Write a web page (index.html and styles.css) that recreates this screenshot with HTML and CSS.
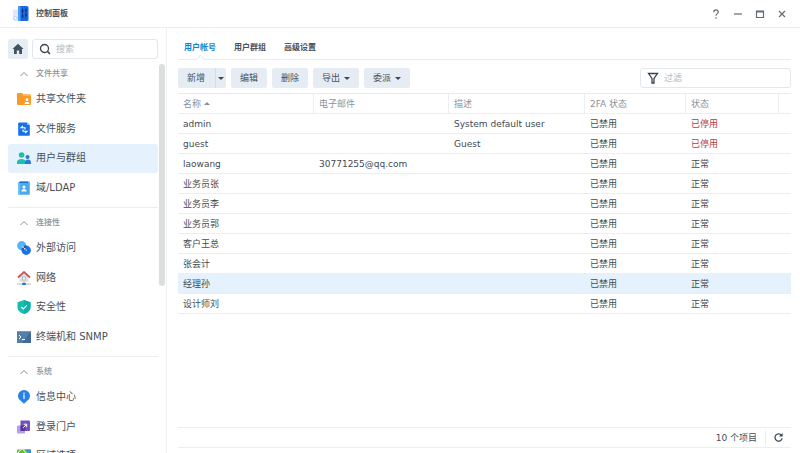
FILE: index.html
```html
<!DOCTYPE html>
<html lang="zh-CN">
<head>
<meta charset="utf-8">
<title>控制面板</title>
<link rel="stylesheet" href="styles.css">
</head>
<body>
<header class="titlebar">
  <svg class="app-icon" viewBox="0 0 16 16"><path d="M1 3.500h5V15H1a1 1 0 0 1-1-1V4.500a1 1 0 0 1 1-1z" fill="#dde9f8"/><circle cx="2.500" cy="12" r="1.500" fill="#fff" stroke="#8fb0dd" stroke-width=".5"/><path d="M5 0h9a1.500 1.500 0 0 1 1.500 1.500v12A1.500 1.500 0 0 1 14 15H5z" fill="#1b6be0"/><path d="M5 0h2.500v15H5z" fill="#4a9cf5"/><path d="M9.500 2.500v10M13 2.500v10" stroke="#0b3fa0"/><path d="M8.500 5h2M12 9h2M8.500 10h2M12 4h2" stroke="#0a2f80" stroke-width="1.500"/></svg>
  <h1 class="title">控制面板</h1>
  <div class="window-controls">
    <button type="button" aria-label="帮助"><svg viewBox="0 0 10 10"><path d="M2.800 3.200C2.800 .2 7.400 .3 7.300 3 7.200 4.700 5 4.700 5 6.800M5 8.300v1.400"/></svg></button>
    <button type="button" aria-label="最小化"><svg viewBox="0 0 10 10"><path d="M1 5h8"/></svg></button>
    <button type="button" aria-label="最大化"><svg viewBox="0 0 10 10"><path d="M1.500 2h7v6.500h-7zM1.500 3h7"/></svg></button>
    <button type="button" aria-label="关闭"><svg viewBox="0 0 10 10"><path d="M2 2l6 6M8 2L2 8"/></svg></button>
  </div>
</header>
<div class="body">
  <aside class="sidebar">
    <div class="side-tools">
      <button class="home" type="button" aria-label="主页"><svg viewBox="0 0 12 12"><path d="M6 .8L11.600 6H10v5H7.200V7.500H4.800V11H2V6H.4z" fill="#44525f"/></svg></button>
      <label class="field">
        <svg viewBox="0 0 12 12"><circle cx="5.500" cy="5.500" r="4" fill="none" stroke="#36434f" stroke-width="1.300"/><path d="M8.400 8.400L11 11" stroke="#36434f" stroke-width="1.500"/></svg>
        <input type="text" placeholder="搜索" aria-label="搜索">
      </label>
    </div>
    <div class="side-scroll">
      <nav class="nav">
        <section class="group">
          <h2><svg viewBox="0 0 8 6"><path d="M.5 5L4 1.500 7.500 5"/></svg>文件共享</h2>
          <div class="items">
            <a href="#"><svg viewBox="0 0 14 14"><path d="M0 2a1 1 0 0 1 1-1h4l1.500 1.500H13a1 1 0 0 1 1 1V12a1 1 0 0 1-1 1H1a1 1 0 0 1-1-1z" fill="#f79a2b"/><path d="M0 4h14V3.500a1 1 0 0 0-1-1H7L5.500 4z" fill="#ffb54d"/><circle cx="10" cy="7.700" r="1.400" fill="#fff"/><path d="M7.500 12c0-3 5-3 5 0z" fill="#fff"/></svg>共享文件夹</a>
            <a href="#"><svg viewBox="0 0 14 14"><path d="M2 .5h8L12.800 3v10a.8.800 0 0 1-.8.800H2a.8.800 0 0 1-.8-.8V1.300A.8.800 0 0 1 2 .5z" fill="#1670e8"/><path d="M10 .5V3h2.800z" fill="#8cc4ff"/><path d="M6 4L4 5.700h4v1.800M8 11l2-1.700H6V7.500" fill="none" stroke="#fff" stroke-width="1.100"/></svg>文件服务</a>
            <a class="active" href="#" aria-current="page"><svg viewBox="0 0 14 14"><circle cx="4.600" cy="4" r="2.800" fill="#1fbfae"/><path d="M0 13V11c0-4 9-4 9 0v2z" fill="#1fbfae"/><circle cx="10.500" cy="6" r="2" fill="#2b78dc"/><path d="M8 13v-1.500c0-4 6-4 6 0V13z" fill="#2b78dc"/></svg>用户与群组</a>
            <a href="#"><svg viewBox="0 0 14 14"><path d="M3 .5h9a.8.800 0 0 1 .8.800V13a.8.800 0 0 1-.8.800H2a.8.800 0 0 1-.8-.8V2z" fill="#4ba9ee"/><path d="M1.200 2L3 .5h8V2z" fill="#2377cf"/><path d="M1.200 2H3v11.800H2a.8.800 0 0 1-.8-.8z" fill="#6fc1f8"/><circle cx="7" cy="6" r="1.500" fill="#fff"/><path d="M4.500 10.500c0-3.200 5-3.200 5 0z" fill="#fff"/></svg>域/LDAP</a>
          </div>
        </section>
        <section class="group">
          <h2><svg viewBox="0 0 8 6"><path d="M.5 5L4 1.500 7.500 5"/></svg>连接性</h2>
          <div class="items">
            <a href="#"><svg viewBox="0 0 14 14"><circle cx="4.700" cy="4.700" r="4.600" fill="#56b5f7"/><circle cx="9.200" cy="9.200" r="4.700" fill="#1f72e5"/><path d="M4.600 9.300a4.700 4.700 0 0 1 4.600-4.700c.3 2.500-1.500 4.800-4.600 4.700z" fill="#1556c0"/><path d="M5.500 5.500l4 4" stroke="#fff" stroke-width="1.200" stroke-dasharray="1.500 1"/></svg>外部访问</a>
            <a href="#"><svg viewBox="0 0 14 14"><path d="M2.500 6L7 2l4.500 4v5h-9z" fill="#dce2e8"/><path d="M1 6.500L7 1l6 5.500" fill="none" stroke="#cb5250" stroke-width="1.700"/><rect x="5.500" y="6" width="3" height="3" fill="#f9fbfd" stroke="#9dabba" stroke-width=".7"/><path d="M0 13h14" stroke="#aab6c2"/><path d="M7 11v1" stroke="#789"/><rect x="5" y="12" width="4" height="2" rx=".7" fill="#2673d9"/></svg>网络</a>
            <a href="#"><svg viewBox="0 0 14 14"><path d="M7 0l6.500 2.200V7c0 3.500-2.800 5.800-6.500 7C3.300 12.800.5 10.500.5 7V2.200z" fill="#17bdb0"/><path d="M7 0l6.500 2.200V7c0 3.500-2.800 5.800-6.500 7z" fill="#10b0aa"/><path d="M4.300 7l2 2 3.500-3.700" fill="none" stroke="#fff" stroke-width="1.100"/></svg>安全性</a>
            <a href="#"><svg viewBox="0 0 14 14"><path d="M0 1.500h14V13H0z" fill="#416a99"/><path d="M0 1.500h14L5 13H0z" fill="#567eaa"/><path d="M2 5l2 2-2 2M5 9.500h3" fill="none" stroke="#fff" stroke-width="1"/></svg>终端机和 SNMP</a>
          </div>
        </section>
        <section class="group">
          <h2><svg viewBox="0 0 8 6"><path d="M.5 5L4 1.500 7.500 5"/></svg>系统</h2>
          <div class="items">
            <a href="#"><svg viewBox="0 0 14 14"><path d="M7 0a6 6 0 0 1 6 6c0 3.500-4.200 5.500-6 8-1.800-2.500-6-4.500-6-8a6 6 0 0 1 6-6z" fill="#2482e8"/><path d="M6.300 5H7v4M7 2.500v1.400" fill="none" stroke="#fff" stroke-width="1.200"/></svg>信息中心</a>
            <a href="#"><svg viewBox="0 0 14 14"><rect x="0" y="5.500" width="8" height="8" rx=".8" fill="#b2a0ed"/><path d="M3.500.5H12a1 1 0 0 1 1 1V10a1 1 0 0 1-1 1H3.500z" fill="#7650b7"/><path d="M3.500 5.500H8V11H3.500z" fill="#5b36a0"/><path d="M6.200 7.700l3.300-3.300M6.700 4.200h3v3" fill="none" stroke="#fff" stroke-width="1"/></svg>登录门户</a>
            <a href="#"><svg viewBox="0 0 14 14"><rect y=".5" width="14" height="13" rx="1" fill="#69b82f"/><path d="M8 .5h6v5z" fill="#3193e8"/><path d="M0 5L4 .5M6 .5l7 8" stroke="#fff"/></svg>区域选项</a>
            <a href="#">通知设置</a>
          </div>
        </section>
      </nav>
      <div class="scroll-thumb"></div>
    </div>
  </aside>
  <main class="main">
    <nav class="tabs">
      <a class="current" href="#" aria-current="page">用户帐号</a>
      <a href="#">用户群组</a>
      <a href="#">高级设置</a>
    </nav>
    <div class="toolbar">
      <div class="split"><button class="btn" type="button">新增</button><button class="btn drop" type="button" aria-label="更多新增选项"><i class="caret"></i></button></div>
      <button class="btn" type="button">编辑</button>
      <button class="btn" type="button">删除</button>
      <button class="btn" type="button">导出<i class="caret"></i></button>
      <button class="btn" type="button">委派<i class="caret"></i></button>
      <label class="field filter">
        <svg viewBox="0 0 12 12"><path d="M1.500 1.500h9L7 6.500V11H5V6.500z" fill="none" stroke="#36434f" stroke-width="1.300"/></svg>
        <input type="text" placeholder="过滤" aria-label="过滤">
      </label>
    </div>
    <div class="table-area">
      <table>
        <colgroup><col class="c-name"><col class="c-mail"><col class="c-desc"><col class="c-auth"><col><col class="c-end"></colgroup>
        <thead><tr><th>名称<i class="caret up"></i></th><th>电子邮件</th><th>描述</th><th>2FA 状态</th><th>状态</th><th></th></tr></thead>
        <tbody>
          <tr><td>admin</td><td></td><td>System default user</td><td>已禁用</td><td class="off">已停用</td><td></td></tr>
          <tr><td>guest</td><td></td><td>Guest</td><td>已禁用</td><td class="off">已停用</td><td></td></tr>
          <tr><td>laowang</td><td>30771255@qq.com</td><td></td><td>已禁用</td><td>正常</td><td></td></tr>
          <tr><td>业务员张</td><td></td><td></td><td>已禁用</td><td>正常</td><td></td></tr>
          <tr><td>业务员李</td><td></td><td></td><td>已禁用</td><td>正常</td><td></td></tr>
          <tr><td>业务员郭</td><td></td><td></td><td>已禁用</td><td>正常</td><td></td></tr>
          <tr><td>客户王总</td><td></td><td></td><td>已禁用</td><td>正常</td><td></td></tr>
          <tr><td>张会计</td><td></td><td></td><td>已禁用</td><td>正常</td><td></td></tr>
          <tr class="selected"><td>经理孙</td><td></td><td></td><td>已禁用</td><td>正常</td><td></td></tr>
          <tr><td>设计师刘</td><td></td><td></td><td>已禁用</td><td>正常</td><td></td></tr>
        </tbody>
      </table>
    </div>
    <footer class="status">
      <span>10 个项目</span>
      <button type="button" aria-label="刷新"><svg viewBox="0 0 12 12"><path d="M9.300 3.500A4 4 0 1 0 10 7" fill="none" stroke="#3c4955" stroke-width="1.400"/><path d="M10.500 1v4h-4z" fill="#3c4955"/></svg></button>
    </footer>
  </main>
</div>
</body>
</html>
```
FILE: styles.css
```css
* { box-sizing: border-box; }

body {
  margin: 0;
  height: 100vh;
  overflow: hidden;
  display: flex;
  flex-direction: column;
  background: #fff;
  color: #46505a;
  font: 9px/12px "DejaVu Sans", "Noto Sans CJK SC", sans-serif;
}

button, input { font: inherit; color: inherit; }
button { border: 0; padding: 0; background: none; }
a { color: inherit; text-decoration: none; }
h1, h2 { margin: 0; }

.titlebar {
  flex: none;
  height: 28px;
  display: flex;
  align-items: center;
  padding: 0 12px 0 13px;
  border-bottom: 1px solid #e8ecef;
}
.app-icon { width: 16px; height: 16px; }
.title { margin-left: 7px; font-size: 8px; font-weight: 700; }
.window-controls { margin-left: auto; display: flex; gap: 10px; }
.window-controls button { width: 12px; height: 12px; display: grid; place-items: center; }
.window-controls svg { width: 10px; height: 10px; fill: none; stroke: #626c75; stroke-width: 1.2; }

.body { flex: 1; min-height: 0; display: flex; }

.sidebar {
  flex: none;
  width: 167px;
  display: flex;
  flex-direction: column;
  padding-top: 11px;
  border-right: 1px solid #eef0f2;
}
.side-tools { flex: none; display: flex; gap: 4px; padding: 0 8px; }
.home {
  width: 20px;
  height: 20px;
  display: grid;
  place-items: center;
  border-radius: 2px;
  background: #e6edf5;
}
.home svg { width: 12px; height: 12px; }
.field {
  flex: 1;
  height: 20px;
  display: flex;
  align-items: center;
  gap: 5px;
  padding: 0 6px;
  border: 1px solid #e2e7eb;
  border-radius: 3px;
}
.field svg { flex: none; width: 12px; height: 12px; }
.field input { width: 100%; min-width: 0; padding: 0; border: 0; outline: 0; background: none; }
.field input::placeholder { color: #b4babf; opacity: 1; }

.side-scroll { flex: 1; min-height: 0; display: flex; padding: 5px 1px 0 8px; overflow: hidden; }
.nav { flex: 1; }
.scroll-thumb { flex: none; width: 6px; height: 222px; margin-left: 1px; border-radius: 3px; background: #dcdddd; }
.group { padding-bottom: 4px; }
.group + .group { padding-top: 5px; border-top: 1px solid #eceff1; }
.group h2 {
  height: 20px;
  display: flex;
  align-items: center;
  gap: 8px;
  padding-left: 12px;
  color: #8a9299;
  font-size: 8px;
  font-weight: 500;
}
.group h2 svg { width: 8px; height: 6px; fill: none; stroke: #858e96; stroke-width: 1; }
.items { height: 119px; display: grid; grid-template-rows: repeat(4, 1fr); }
.items a {
  display: flex;
  align-items: center;
  gap: 5px;
  padding-left: 9px;
  border-radius: 3px;
  font-size: 10px;
}
.items a.active { background: #e5f1fc; }
.items svg { width: 14px; height: 14px; }

.main { flex: 1; min-width: 0; display: flex; flex-direction: column; padding: 11px 9px 5px 11px; }
.tabs {
  flex: none;
  height: 21px;
  display: flex;
  gap: 18px;
  padding: 3px 6px 0;
  border-bottom: 1px solid #e8ecef;
  font-size: 8px;
  font-weight: 700;
}
.tabs a { position: relative; }
.tabs .current { color: #0d83cf; }
.tabs .current::after {
  content: "";
  position: absolute;
  left: 50%;
  bottom: -4px;
  width: 6px;
  height: 6px;
  margin-left: -3px;
  border: solid #e8ecef;
  border-width: 1px 0 0 1px;
  background: linear-gradient(135deg, #fff 60%, transparent 60%);
  transform: rotate(45deg);
}

.toolbar { flex: none; display: flex; gap: 4px; padding: 8px 0 5px; }
.btn {
  height: 20px;
  display: flex;
  align-items: center;
  gap: 4px;
  padding: 0 9px;
  border-radius: 2px;
  background: #e6ecf4;
}
.split { display: flex; margin-right: 1px; }
.split .btn:first-child { padding-right: 10px; border-radius: 2px 0 0 2px; }
.split .drop { padding: 0 2px; border-left: 1px solid #d5dce5; border-radius: 0 2px 2px 0; }
.btn + .btn { margin-left: 1px; }
.split .btn + .btn { margin-left: 0; }
.caret { display: inline-block; border: solid transparent; border-width: 3px 3px 0; border-top-color: #3c4955; }
.caret.up { margin-left: 3px; border-width: 0 3px 3px; border-bottom-color: #8a9299; vertical-align: 2px; }
.filter { flex: none; width: 151px; margin-left: auto; }

.table-area { flex: 1; min-height: 0; overflow: hidden; border-top: 1px solid #e8ecef; }
table { width: 100%; table-layout: fixed; border-collapse: separate; border-spacing: 0; }
.c-name, .c-desc { width: 136px; }
.c-mail { width: 135px; }
.c-auth { width: 101px; }
.c-end { width: 12px; }
th, td {
  height: 20px;
  padding: 0 5px;
  border-bottom: 1px solid #eceff1;
  text-align: left;
  white-space: nowrap;
}
th { border-right: 1px solid #eceff1; color: #8a9299; font-weight: 400; }
th:last-child { border-right: 0; }
td { color: #414b54; }
.off { color: #b83a3e; }
.selected td { background: #e5f1fc; }

.status {
  flex: none;
  height: 21px;
  display: flex;
  align-items: center;
  justify-content: flex-end;
  border: solid #eceff1;
  border-width: 1px 0;
}
.status button {
  width: 26px;
  height: 14px;
  display: grid;
  place-items: center;
  margin-left: 8px;
  border-left: 1px solid #e8ecef;
}
.status svg { width: 11px; height: 11px; }
```
